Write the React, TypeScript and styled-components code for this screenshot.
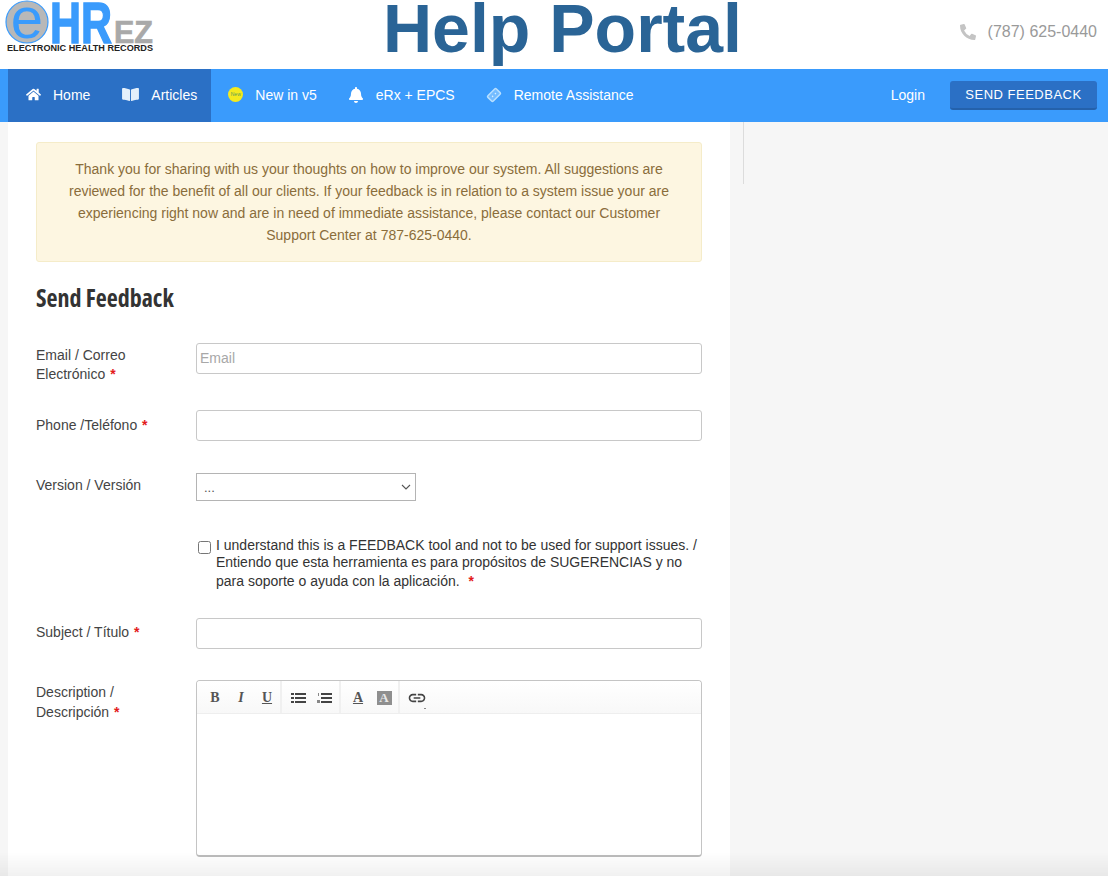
import React from "react";
import styled, { createGlobalStyle } from "styled-components";
import { FaHome, FaBookOpen, FaBell, FaPhoneAlt } from "react-icons/fa";
import { MdLink } from "react-icons/md";

const Global = createGlobalStyle`
  html, body { margin: 0; padding: 0; height: 876px; overflow: hidden; background: #f6f6f6; }
  body { font-family: "Liberation Sans", Arial, sans-serif; font-size: 14px; color: #444; }
  * { box-sizing: border-box; }
`;

const Page = styled.div`
  width: 1108px;
  height: 876px;
  overflow: hidden;
  display: flex;
  flex-direction: column;
`;
const Header = styled.header`
  height: 69px;
  flex: none;
  background: #fff;
  display: grid;
  grid-template-columns: 383px 1fr auto;
  align-items: start;
  padding-right: 11px;
`;
const LogoSvg = styled.svg`
  display: block;
`;
const Title = styled.h1`
  margin: 0;
  font-size: 68px;
  line-height: 57px;
  font-weight: 700;
  color: #2a6496;
  white-space: nowrap;
`;
const Phone = styled.div`
  display: flex;
  align-items: center;
  gap: 12px;
  height: 63px;
  font-size: 16px;
  color: #9a9a9a;
  svg { color: #c4c4c4; width: 16px; height: 16px; }
`;
const Nav = styled.nav`
  height: 53px;
  flex: none;
  background: #3a9bfc;
  display: flex;
  align-items: stretch;
  padding: 0 11px 0 8px;
`;
const ActiveGroup = styled.div`
  display: flex;
  padding-left: 1px;
  background: #2b70c5;
`;
const NavItem = styled.a`
  display: flex;
  align-items: center;
  gap: 12px;
  padding: 0 14px 2px 17px;
  color: #fff;
  font-size: 14px;
  white-space: nowrap;
`;
const HomeIcon = styled(FaHome)`
  width: 15px;
  height: 15px;
  flex: none;
`;
const BookIcon = styled(FaBookOpen)`
  width: 17px;
  height: 15px;
  flex: none;
  margin-left: 1px;
  color: #e4f0fb;
`;
const BellIcon = styled(FaBell)`
  width: 16px;
  height: 16px;
  flex: none;
`;
const RemoteSvg = styled.svg`
  width: 16px;
  height: 16px;
  flex: none;
`;
const NewBadge = styled.span`
  width: 15px;
  height: 15px;
  flex: none;
  border-radius: 50%;
  background: #f4ea1e;
  color: #5aa05a;
  font-size: 5px;
  line-height: 15px;
  text-align: center;
  overflow: hidden;
`;
const NavRight = styled.div`
  margin-left: auto;
  display: flex;
  align-items: center;
  gap: 25px;
`;
const Login = styled.a`
  color: #fff;
  font-size: 14px;
  margin-bottom: 2px;
`;
const FeedbackButton = styled.button`
  width: 147px;
  height: 29px;
  padding: 0;
  border: 0;
  border-bottom: 2px solid #2461ab;
  border-radius: 3px;
  background: #2b70c5;
  color: #fff;
  font-family: inherit;
  font-size: 13px;
  letter-spacing: 0.5px;
`;
const Main = styled.div`
  flex: 1;
  display: flex;
  align-items: flex-start;
  padding-left: 8px;
  min-height: 0;
`;
const Content = styled.main`
  width: 722px;
  height: 754px;
  background: #fff;
  padding: 20px 28px 0;
`;
const SideRule = styled.aside`
  width: 1px;
  height: 62px;
  margin-left: 13px;
  background: #dcdcdc;
`;
const Alert = styled.div`
  height: 120px;
  padding: 15px 30px;
  background: #fdf6e1;
  border: 1px solid #f5ecc9;
  border-radius: 3px;
  color: #8a6d3b;
  font-size: 14px;
  line-height: 22px;
  text-align: center;
`;
const Heading = styled.h2`
  margin: 20px 0 29px;
  height: 32px;
  font-family: "Open Sans", sans-serif;
  font-stretch: 75%;
  font-size: 24px;
  line-height: 32px;
  font-weight: 700;
  color: #333;
`;
const Row = styled.div<{ $gap: number }>`
  display: grid;
  grid-template-columns: 160px 506px;
  margin-bottom: ${(p) => p.$gap}px;
`;
const Label = styled.label<{ $top: number; $lh?: number }>`
  padding-top: ${(p) => p.$top}px;
  padding-right: 30px;
  font-size: 14px;
  line-height: ${(p) => p.$lh ?? 20}px;
  color: #444;
`;
const Req = styled.span`
  color: #e31b1b;
  font-weight: 700;
  margin-left: 1px;
`;
const Input = styled.input`
  display: block;
  width: 506px;
  height: 31px;
  padding: 0 3px 1px 3px;
  border: 1px solid #c8c8c8;
  border-radius: 3px;
  background: #fff;
  font-family: inherit;
  font-size: 14px;
  &::placeholder { color: #a8a8a8; opacity: 1; }
`;
const Select = styled.select`
  display: block;
  width: 220px;
  height: 28px;
  padding: 0 7px;
  border: 1px solid #b4b4b4;
  border-radius: 0;
  appearance: none;
  background: #fff url("data:image/svg+xml,%3Csvg xmlns='http://www.w3.org/2000/svg' width='10' height='6' viewBox='0 0 10 6'%3E%3Cpath d='M1 1l4 4 4-4' fill='none' stroke='%23555' stroke-width='1.1'/%3E%3C/svg%3E") no-repeat right 4px center;
  color: #555;
  font-family: inherit;
  font-size: 13px;
`;
const CheckCell = styled.div`
  grid-column: 2;
  display: grid;
  grid-template-columns: 18px 1fr;
  padding-left: 2px;
`;
const Check = styled.input`
  width: 13px;
  height: 13px;
  margin: 8px 0 0;
`;
const CheckText = styled.div`
  color: #333;
  font-size: 14px;
  line-height: 17px;
  padding-top: 4px;
  width: 490px;
`;
const LastLine = styled.span`
  display: block;
  margin-top: 2px;
`;
const Editor = styled.div`
  width: 506px;
  height: 177px;
  border: 1px solid #c4c4c4;
  border-bottom: 2px solid #bcbcbc;
  border-radius: 4px;
  background: #fff;
  overflow: hidden;
`;
const Toolbar = styled.div`
  height: 33px;
  display: flex;
  background: linear-gradient(#fff, #f8f8f8);
  border-bottom: 1px solid #eeeeee;
`;
const ToolGroup = styled.div<{ $w: number; $pad: number }>`
  width: ${(p) => p.$w}px;
  flex: none;
  display: flex;
  align-items: center;
  padding-top: 1px;
  padding-left: ${(p) => p.$pad}px;
  border-right: 2px solid #f0f0f0;
  &:last-child { border-right: 0; }
`;
const Tool = styled.span<{ $italic?: boolean; $under?: boolean }>`
  width: 26px;
  height: 18px;
  display: flex;
  align-items: center;
  justify-content: center;
  font-family: "Liberation Serif", serif;
  font-weight: 700;
  font-size: 14px;
  color: #555;
  font-style: ${(p) => (p.$italic ? "italic" : "normal")};
  text-decoration: ${(p) => (p.$under ? "underline" : "none")};
`;
const FillGlyph = styled.span`
  width: 15px;
  height: 14px;
  display: block;
  text-align: center;
  line-height: 14px;
  font-size: 13px;
  background: #8f8f8f;
  color: #e8e8e8;
`;
const LinkTool = styled(Tool)`
  position: relative;
  svg { width: 20px; height: 20px; color: #444; }
  &::after {
    content: "";
    position: absolute;
    right: 4px;
    bottom: -2px;
    width: 2px;
    height: 1px;
    background: #888;
  }
`;
const BottomFade = styled.div`
  position: fixed;
  left: 0;
  right: 0;
  bottom: 0;
  height: 24px;
  background: linear-gradient(rgba(0, 0, 0, 0), rgba(0, 0, 0, 0.055));
  pointer-events: none;
`;

const Logo = () => (
  <LogoSvg width="170" height="56" viewBox="0 0 170 56" fontFamily="'Liberation Sans', sans-serif">
    <circle cx="27" cy="22" r="21" fill="#b8b8b8" stroke="#3a9bfc" strokeWidth="1.2" />
    <text x="27" y="38" textAnchor="middle" fontSize="58" fill="#3a9bfc">e</text>
    <text x="50" y="43" fontSize="57" fontWeight="700" fill="#3a9bfc" stroke="#3a9bfc" strokeWidth="1.5" textLength="62" lengthAdjust="spacingAndGlyphs">HR</text>
    <text x="114" y="43" fontSize="32" fontWeight="700" fill="#a9a9a9" stroke="#a9a9a9" strokeWidth="0.7" textLength="39" lengthAdjust="spacingAndGlyphs">EZ</text>
    <text x="7" y="51" fontSize="8.4" fontWeight="700" fill="#222" textLength="146" lengthAdjust="spacingAndGlyphs">ELECTRONIC HEALTH RECORDS</text>
  </LogoSvg>
);

const RemoteIcon = () => (
  <RemoteSvg viewBox="0 0 16 16">
    <rect x="2" y="4.2" width="12" height="7.6" rx="1.2" fill="#74bcff" stroke="#b9e0ff" strokeWidth="1.5" transform="rotate(-45 8 8)" />
    <circle cx="6.6" cy="9.4" r="0.8" fill="#d8eeff" />
    <circle cx="9.4" cy="6.6" r="0.8" fill="#d8eeff" />
  </RemoteSvg>
);

const UlIcon = () => (
  <svg width="15" height="10" viewBox="0 0 15 10" fill="#444">
    <rect x="0" y="0" width="3" height="2" />
    <rect x="4" y="0" width="11" height="2" />
    <rect x="0" y="4" width="3" height="2" />
    <rect x="4" y="4" width="11" height="2" />
    <rect x="0" y="8" width="3" height="2" />
    <rect x="4" y="8" width="11" height="2" />
  </svg>
);
const OlIcon = () => (
  <svg width="15" height="10" viewBox="0 0 15 10" fill="#444">
    <rect x="1" y="0" width="1" height="3" fill="#888" />
    <rect x="0" y="7" width="3" height="3" fill="#888" />
    <rect x="4" y="0" width="11" height="2" />
    <rect x="4" y="4" width="11" height="2" />
    <rect x="4" y="8" width="11" height="2" />
  </svg>
);

export default function App() {
  return (
    <Page>
      <Global />
      <Header>
        <Logo />
        <Title>Help Portal</Title>
        <Phone>
          <FaPhoneAlt />
          (787) 625-0440
        </Phone>
      </Header>
      <Nav>
        <ActiveGroup>
          <NavItem><HomeIcon />Home</NavItem>
          <NavItem><BookIcon />Articles</NavItem>
        </ActiveGroup>
        <NavItem><NewBadge>New</NewBadge>New in v5</NavItem>
        <NavItem><BellIcon />eRx + EPCS</NavItem>
        <NavItem><RemoteIcon />Remote Assistance</NavItem>
        <NavRight>
          <Login>Login</Login>
          <FeedbackButton>SEND FEEDBACK</FeedbackButton>
        </NavRight>
      </Nav>
      <Main>
        <Content>
          <Alert>
            Thank you for sharing with us your thoughts on how to improve our system. All suggestions are reviewed for
            the benefit of all our clients. If your feedback is in relation to a system issue your are experiencing
            right now and are in need of immediate assistance, please contact our Customer Support Center at
            787-625-0440.
          </Alert>
          <Heading>Send Feedback</Heading>
          <Row $gap={26}>
            <Label $top={3} $lh={19}>Email / Correo Electrónico <Req>*</Req></Label>
            <Input placeholder="Email" />
          </Row>
          <Row $gap={32}>
            <Label $top={5}>Phone /Teléfono <Req>*</Req></Label>
            <Input />
          </Row>
          <Row $gap={32}>
            <Label $top={2}>Version / Versión</Label>
            <Select defaultValue="..."><option>...</option></Select>
          </Row>
          <Row $gap={28}>
            <CheckCell>
              <Check type="checkbox" />
              <CheckText>
                I understand this is a FEEDBACK tool and not to be used for support issues. / Entiendo que esta
                herramienta es para propósitos de SUGERENCIAS y no
                <LastLine>para soporte o ayuda con la aplicación. &nbsp;<Req>*</Req></LastLine>
              </CheckText>
            </CheckCell>
          </Row>
          <Row $gap={31}>
            <Label $top={4}>Subject / Título <Req>*</Req></Label>
            <Input />
          </Row>
          <Row $gap={0}>
            <Label $top={2}>Description / Descripción <Req>*</Req></Label>
            <Editor>
              <Toolbar>
                <ToolGroup $w={85} $pad={5}>
                  <Tool>B</Tool>
                  <Tool $italic>I</Tool>
                  <Tool $under>U</Tool>
                </ToolGroup>
                <ToolGroup $w={59} $pad={3}>
                  <Tool><UlIcon /></Tool>
                  <Tool><OlIcon /></Tool>
                </ToolGroup>
                <ToolGroup $w={59} $pad={4}>
                  <Tool $under>A</Tool>
                  <Tool><FillGlyph>A</FillGlyph></Tool>
                </ToolGroup>
                <ToolGroup $w={36} $pad={4}>
                  <LinkTool><MdLink /></LinkTool>
                </ToolGroup>
              </Toolbar>
            </Editor>
          </Row>
        </Content>
        <SideRule />
      </Main>
      <BottomFade />
    </Page>
  );
}
